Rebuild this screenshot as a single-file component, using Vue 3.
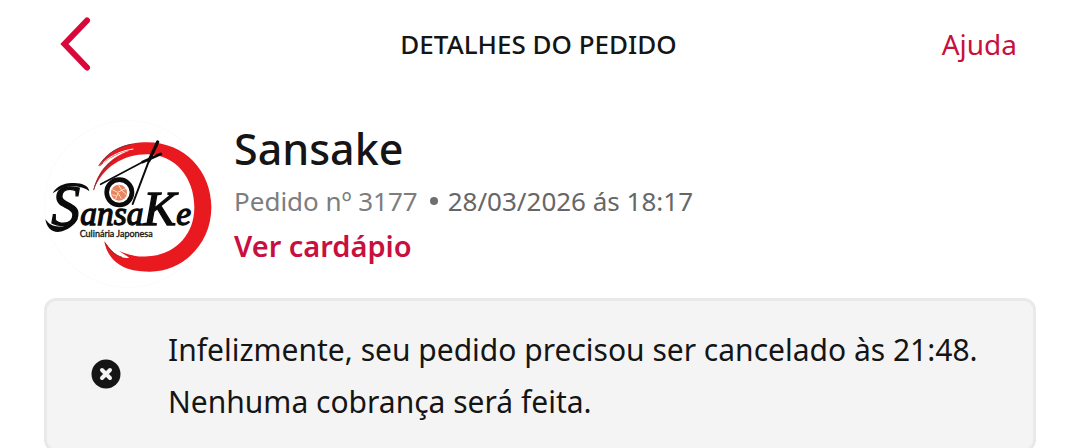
<script setup>
const order = {
  store: 'Sansake',
  number: '3177',
  placedAt: '28/03/2026 ás 18:17',
  cancelledAt: '21:48',
}
</script>

<template>
  <main class="page">
    <header class="topbar">
      <button class="back" type="button" aria-label="Voltar">
        <svg width="32" height="56" viewBox="0 0 32 56" aria-hidden="true">
          <path d="M27 4.500 4.500 28 27 51.500" />
        </svg>
      </button>
      <h1 class="title">DETALHES DO PEDIDO</h1>
      <a class="help" href="#ajuda">Ajuda</a>
    </header>

    <section class="store">
      <svg class="logo" viewBox="24 24 504 504" role="img" aria-label="Sansake Culinária Japonesa">
        <circle cx="276" cy="276" r="250" fill="#fff" stroke="#fbfbfb" stroke-width="3" />
        <path
          fill="#e8191f"
          d="M172 236C184 178 222 136 280 116C246 121 216 140 190 164C206 126 252 94 324 91C444 87 526 176 526 286C526 398 438 480 340 479C306 479 276 474 252 459C228 444 210 420 205 388C217 405 229 420 244 430C257 437 269 440 280 437L248 416C277 429 306 436 336 433C418 429 475 368 475 286C475 197 418 128 334 127C262 127 201 164 172 236Z"
        />
        <path d="M202 152C228 128 258 116 292 111" fill="none" stroke="#fff" stroke-width="3" />
        <path d="M188 162C208 128 244 104 286 97M173 234C184 192 210 158 242 140M207 392C220 414 236 429 258 436" fill="none" stroke="#813039" stroke-width="3" />
        <g fill="none" stroke="#0b0b0b" stroke-linecap="round">
          <path d="M365 90 339 146" stroke-width="10" />
          <path d="M339 146 290 276" stroke-width="6" />
          <path d="M374 126 320 150" stroke-width="9" />
          <path d="M320 150 194 217" stroke-width="5" />
        </g>
        <circle cx="250" cy="241" r="38" fill="#fff" stroke="#0b0b0b" stroke-width="14" />
        <circle cx="249" cy="242" r="24" fill="#e88560" />
        <path d="M229 233 245 241 270 229M239 261 246 243 256 260M248 219 257 235 271 248M229 248 241 252" fill="none" stroke="#ffe0c8" stroke-width="3" />
        <text class="wordmark" x="46" y="340"><tspan class="initial">S</tspan>ansa<tspan class="tall">K</tspan>e</text>
        <path d="M160 238C158 220 136 211 106 213C82 214 60 224 50 244C70 230 90 224 110 223C134 223 150 230 160 238Z" fill="#0b0b0b" />
        <path d="M28 321C32 352 56 369 86 355C106 346 120 334 126 318C104 340 84 346 62 343C46 341 36 333 28 321Z" fill="#0b0b0b" />
        <text class="tagline" x="131" y="374">Culinária Japonesa</text>
      </svg>
      <div class="info">
        <h2 class="name">{{ order.store }}</h2>
        <p class="meta">
          <span>Pedido nº {{ order.number }}</span>
          <span class="dot" aria-hidden="true"></span>
          <time class="date">{{ order.placedAt }}</time>
        </p>
        <a class="menu" href="#cardapio">Ver cardápio</a>
      </div>
    </section>

    <section class="notice" role="status">
      <svg class="notice-icon" width="30" height="30" viewBox="0 0 30 30" aria-hidden="true">
        <circle cx="15" cy="15" r="14.500" fill="#151515" />
        <path d="M11 11 19 19M19 11 11 19" fill="none" stroke="#f4f4f4" stroke-width="4" stroke-linecap="round" />
      </svg>
      <p class="message">
        Infelizmente, seu pedido precisou ser cancelado às {{ order.cancelledAt }}.<br />
        Nenhuma cobrança será feita.
      </p>
    </section>
  </main>
</template>

<style>
body {
  background: #fff;
  overflow: hidden;
}
</style>

<style scoped>
.page {
  padding: 0 44px;
  font-family: "Noto Sans", "Open Sans", sans-serif;
  color: #151515;
}
.topbar {
  display: grid;
  grid-template-columns: 1fr auto 1fr;
  align-items: center;
  height: 88px;
  padding: 0 19px 0 16px;
}
.back {
  display: flex;
  justify-self: start;
  padding: 0;
  border: 0;
  background: none;
}
.back path {
  fill: none;
  stroke: #d9083b;
  stroke-width: 6;
  stroke-linecap: round;
  stroke-linejoin: miter;
}
.title {
  margin: 0;
  font-size: 26px;
  font-weight: 500;
  line-height: 36px;
}
.help {
  justify-self: end;
  color: #c8103f;
  font-size: 28px;
  line-height: 36px;
  text-decoration: none;
}
.store {
  display: flex;
  gap: 22px;
  margin-top: 32px;
}
.logo {
  flex: none;
  width: 168px;
  height: 168px;
}
.wordmark {
  font-family: "Liberation Serif", serif;
  font-size: 100px;
  font-style: italic;
  font-weight: 400;
  fill: #0b0b0b;
  stroke: #0b0b0b;
  stroke-width: 4;
}
.initial {
  font-size: 174px;
}
.tall {
  font-size: 148px;
}
.tagline {
  font-family: Lato, sans-serif;
  font-size: 27px;
  fill: #161616;
  stroke: #161616;
  stroke-width: 1;
}
.name {
  margin: 0;
  font-size: 43px;
  font-weight: 500;
  line-height: 58px;
}
.meta {
  display: flex;
  align-items: center;
  margin: 0;
  color: #7d7d7d;
  font-size: 26px;
  line-height: 46px;
}
.dot {
  width: 8px;
  height: 8px;
  margin: 0 10px 0 12px;
  border-radius: 50%;
  background: #6f6f6f;
}
.date {
  color: #666;
}
.menu {
  color: #c8103f;
  font-size: 29px;
  font-weight: 600;
  line-height: 44px;
  text-decoration: none;
}
.notice {
  display: flex;
  align-items: center;
  gap: 47px;
  margin-top: 10px;
  padding: 23px 44px 21px;
  border: 3px solid #e9e9e9;
  border-radius: 12px;
  background: #f4f4f4;
}
.notice-icon {
  flex: none;
  margin-bottom: 4px;
}
.message {
  margin: 0;
  font-size: 30px;
  line-height: 52px;
}
</style>
